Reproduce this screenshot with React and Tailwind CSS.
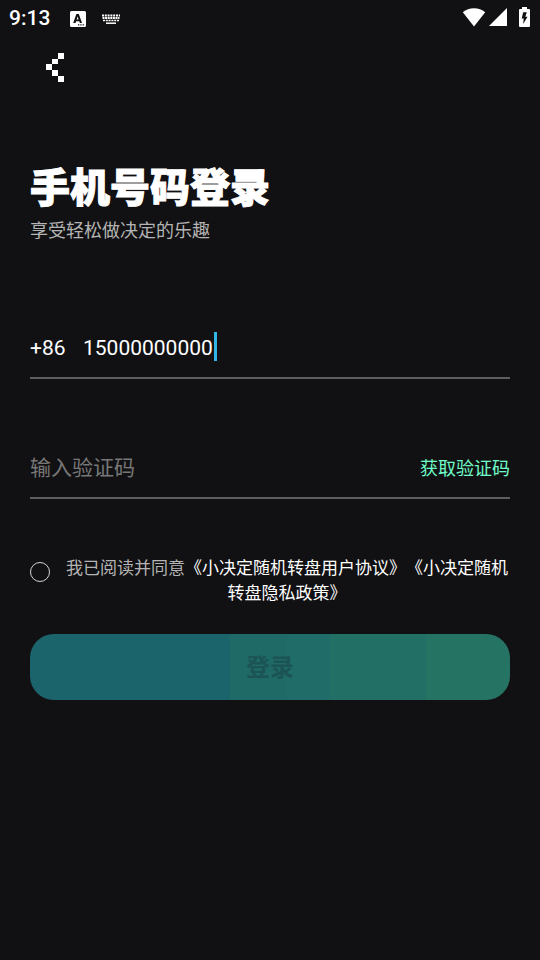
import React, { useState } from "react";

const StatusBar = () => {
  return (
    <header className="flex items-center justify-between h-[37px] pl-[9px] pr-[10px]">
      <div className="flex items-center">
        <span className="w-[61px] pb-px text-[21px] leading-9 font-medium">9:13</span>
        <svg className="w-4 h-4" viewBox="0 0 16 16" fill="currentColor">
          <path
            fillRule="evenodd"
            d="M1.5 0h13A1.5 1.5 0 0116 1.5v13a1.5 1.5 0 01-1.5 1.5h-13A1.5 1.5 0 010 14.5v-13A1.5 1.5 0 011.5 0zM6.4 3L3.200 12h2.300l.6-1.800h3.200l.6 1.800h2.100L8.800 3H6.400zm1.200 2.400l1 3.100H6.600l1-3.100zM8 13.200v1.300h1.300v-1.300H8zm2.300 0v1.300h1.300v-1.300h-1.300zm2.300 0v1.300h1.300v-1.300h-1.300z"
          />
        </svg>
        <svg className="w-5 h-3 ml-[15px]" viewBox="0 0 20 12" fill="none" stroke="currentColor">
          <path strokeWidth="2" strokeDasharray="2 .8" d="M1 2.500h18" />
          <path strokeWidth="2" strokeDasharray="2 .6" d="M1.500 5h17" />
          <path strokeWidth="1.500" strokeDasharray="2 .8" d="M2 7.500h16" />
          <path strokeWidth="1.500" d="M5 10.200h10" />
        </svg>
      </div>
      <div className="flex items-center pb-[3px]">
        <svg className="w-6 h-5" viewBox="0 0 24 20" fill="currentColor">
          <path d="M12 19.500L.8 5.300C4 2.700 7.700 1.200 12 1.200S20 2.700 23.200 5.300L12 19.500z" />
        </svg>
        <svg className="w-[18px] h-[18px] ml-[3px]" viewBox="0 0 18 18" fill="currentColor">
          <path d="M18 0v18H0L18 0z" />
        </svg>
        <svg className="w-[11px] h-5 ml-3" viewBox="0 0 11 20" fill="currentColor">
          <path
            fillRule="evenodd"
            d="M3 0h5v2h2a1 1 0 011 1v16a1 1 0 01-1 1H1a1 1 0 01-1-1V3a1 1 0 011-1h2V0zm1.200 5.200L2.700 11.500h2L4.200 17l4.300-7.300H6.300l1.500-4.500H4.200z"
          />
        </svg>
      </div>
    </header>
  );
};

const BackIcon = () => {
  return (
    <svg className="w-[18px] h-[29px]" viewBox="0 0 18 29" fill="currentColor" shapeRendering="crispEdges">
      <path d="M12 0h6v6h-6zM6 6h6v5H6zM0 11h6v6H0zM6 17h6v6H6zM12 23h6v6h-6z" />
    </svg>
  );
};

const LoginPage = () => {
  const [phone, setPhone] = useState("15000000000");
  const [code, setCode] = useState("");
  const [agreed, setAgreed] = useState(false);

  return (
    <div className="min-h-screen bg-[#111113] text-white font-[Roboto,'Noto_Sans_CJK_SC',sans-serif]">
      <StatusBar />

      <nav className="px-[30px] pt-4">
        <button type="button" aria-label="返回" className="flex px-4">
          <BackIcon />
        </button>
      </nav>

      <main className="px-[30px] pt-[82px]">
        <h1 className="text-[40px] leading-[50px] font-black [-webkit-text-stroke:1px_white]">手机号码登录</h1>
        <p className="mt-[3px] text-lg leading-7 text-[#b4b4b4]">享受轻松做决定的乐趣</p>

        <form onSubmit={(e) => e.preventDefault()}>
          {/* Phone number */}
          <div className="mt-[71px] h-[63px] flex items-center border-b-2 border-[#5e5c60] text-[21px]">
            <label htmlFor="phone" className="w-[53px] pt-1">
              +86
            </label>
            <input
              id="phone"
              type="tel"
              value={phone}
              onChange={(e) => setPhone(e.target.value)}
              className="field-sizing-content pt-1 pr-px bg-transparent outline-none caret-transparent"
            />
            <span className="w-[3px] h-[29px] bg-[#33b5e5]"></span>
          </div>

          {/* Verification code */}
          <div className="mt-[57px] h-[63px] flex items-center justify-between border-b-2 border-[#5e5c60]">
            <input
              type="text"
              aria-label="输入验证码"
              placeholder="输入验证码"
              value={code}
              onChange={(e) => setCode(e.target.value)}
              className="flex-1 min-w-0 pt-1 bg-transparent text-[21px] outline-none placeholder:text-[#777777]"
            />
            <button type="button" className="pt-1 text-lg text-[#6ffcc9]">
              获取验证码
            </button>
          </div>

          {/* Agreement */}
          <div className="mt-[57px] flex items-start">
            <input
              id="agree"
              type="checkbox"
              checked={agreed}
              onChange={(e) => setAgreed(e.target.checked)}
              className="appearance-none shrink-0 w-5 h-5 mt-[6px] mr-4 rounded-full border border-[#d4d4d4] checked:bg-[#6ffcc9]"
            />
            <label
              htmlFor="agree"
              className="flex-1 pr-[2px] text-center text-[17px] leading-[25px] text-[#b4b4b4] [text-spacing-trim:space-all]"
            >
              我已阅读并同意
              <a href="#terms" className="text-white">《小决定随机转盘用户协议》</a>
              <a href="#privacy" className="text-white">《小决定随机转盘隐私政策》</a>
            </label>
          </div>

          <button
            type="submit"
            className="mt-7 w-full h-[66px] pt-[2px] rounded-3xl text-2xl font-bold text-[#1c5456] bg-[linear-gradient(to_right,#1c646b_0_41.7%,#1f6a66_41.7%_53.5%,#206c68_53.5%_62.5%,#227065_62.5%_82.5%,#257363_82.5%)]"
          >
            登录
          </button>
        </form>
      </main>
    </div>
  );
};

export default LoginPage;
